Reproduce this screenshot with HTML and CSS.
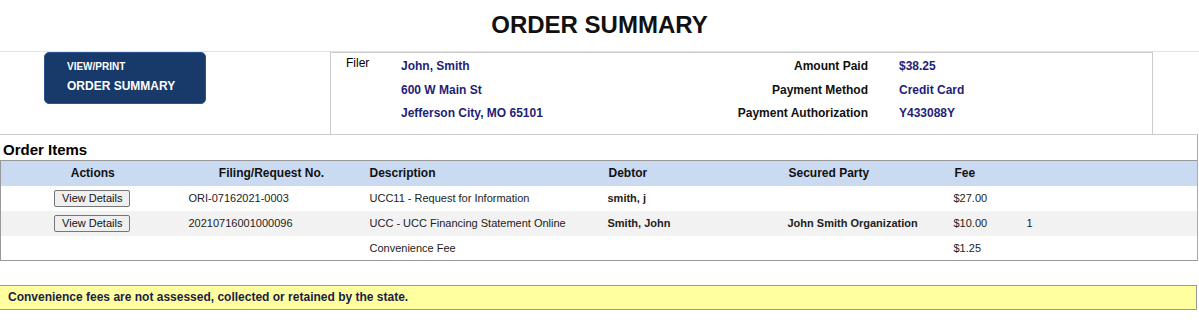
FILE: index.html
```html
<!DOCTYPE html>
<html lang="en">
<head>
    <meta charset="UTF-8">
    <meta name="viewport" content="width=device-width, initial-scale=1.0">
    <title>Order Summary</title>
    <link rel="stylesheet" href="styles.css">
</head>
<body>
    <h1 class="pageTitle">ORDER SUMMARY</h1>

    <div class="summaryHead">
        <div class="printCol">
            <a class="printBtn" href="#">
                <span class="small">VIEW/PRINT</span>
                <span class="big">ORDER SUMMARY</span>
            </a>
        </div>
        <div class="filerBox">
            <div class="lbl">Filer</div>
            <div class="val">John, Smith</div>
            <div class="rlbl">Amount Paid</div>
            <div class="val pad">$38.25</div>

            <div></div>
            <div class="val">600 W Main St</div>
            <div class="rlbl">Payment Method</div>
            <div class="val pad">Credit Card</div>

            <div></div>
            <div class="val">Jefferson City, MO 65101</div>
            <div class="rlbl">Payment Authorization</div>
            <div class="val pad">Y433088Y</div>
        </div>
    </div>

    <div class="orderItems">
        <div class="sectionTitle">Order Items</div>
        <table class="itemsTable">
            <colgroup>
                <col style="width:184px">
                <col style="width:174px">
                <col style="width:245px">
                <col style="width:180px">
                <col style="width:166px">
                <col style="width:73px">
                <col>
            </colgroup>
            <thead>
                <tr>
                    <th class="center">Actions</th>
                    <th class="center">Filing/Request No.</th>
                    <th class="desc">Description</th>
                    <th>Debtor</th>
                    <th>Secured Party</th>
                    <th>Fee</th>
                    <th></th>
                </tr>
            </thead>
            <tbody>
                <tr>
                    <td class="center"><button class="detailBtn">View Details</button></td>
                    <td>ORI-07162021-0003</td>
                    <td class="desc">UCC11 - Request for Information</td>
                    <td class="bold">smith, j</td>
                    <td class="bold"></td>
                    <td>$27.00</td>
                    <td></td>
                </tr>
                <tr class="alt">
                    <td class="center"><button class="detailBtn">View Details</button></td>
                    <td>20210716001000096</td>
                    <td class="desc">UCC - UCC Financing Statement Online</td>
                    <td class="bold">Smith, John</td>
                    <td class="bold">John Smith Organization</td>
                    <td>$10.00</td>
                    <td>1</td>
                </tr>
                <tr>
                    <td></td>
                    <td></td>
                    <td class="desc">Convenience Fee</td>
                    <td></td>
                    <td></td>
                    <td>$1.25</td>
                    <td></td>
                </tr>
            </tbody>
        </table>
    </div>

    <div class="feeNote">Convenience fees are not assessed, collected or retained by the state.</div>
</body>
</html>
```

FILE: styles.css
```css
*{
    margin: 0;
    padding: 0;
    box-sizing: border-box;
}
body{
    font-family: "Liberation Sans", Arial, sans-serif;
    color: #111;
    background: #fff;
}
.pageTitle{
    font-size: 24px;
    font-weight: bold;
    text-align: center;
    line-height: 28px;
    padding: 11px 0 12px;
    height: 51px;
}
.summaryHead{
    display: flex;
    border-top: 1px solid #e2e2e2;
    height: 83px;
}
.printCol{
    width: 330px;
    padding-left: 44px;
}
.printBtn{
    display: block;
    width: 162px;
    height: 52px;
    background: #173a6b;
    border: 1px solid #2b5590;
    border-radius: 5px;
    color: #fff;
    text-decoration: none;
    font-weight: bold;
    padding: 8px 0 0 22px;
}
.printBtn .small{
    display: block;
    font-size: 10px;
    line-height: 12px;
}
.printBtn .big{
    display: block;
    font-size: 12px;
    line-height: 16px;
    margin-top: 5px;
}
.filerBox{
    width: 823px;
    border: 1px solid #ccc;
    border-bottom: 0;
    display: grid;
    grid-template-columns: 55px 300px 167px 1fr;
    grid-auto-rows: 23.5px;
    padding: 2px 0 0 15px;
    font-size: 12px;
    line-height: 23.5px;
}
.filerBox .lbl{
    line-height: 16px;
    color: #000;
}
.filerBox .val{
    font-weight: bold;
    color: #1e1e78;
}
.filerBox .pad{
    padding-left: 31px;
}
.filerBox .rlbl{
    font-weight: bold;
    text-align: right;
    color: #111;
}
.orderItems{
    border-top: 1px solid #ccc;
    border-right: 1px solid #aaa;
    margin-right: 1px;
}
.sectionTitle{
    font-size: 15px;
    font-weight: bold;
    line-height: 18px;
    padding: 6px 0 1px 3px;
    color: #000;
}
.itemsTable{
    width: 100%;
    border-collapse: collapse;
    table-layout: fixed;
    border: 1px solid #999;
    border-right: 0;
    font-size: 11px;
    color: #222;
}
.itemsTable th{
    background: #c9daf1;
    font-size: 12px;
    font-weight: bold;
    text-align: left;
    height: 25px;
    padding: 0 5px;
    color: #111;
}
.itemsTable td{
    height: 25px;
    padding: 0 5px 0 4px;
    white-space: nowrap;
}
.itemsTable .center{
    text-align: center;
}
.itemsTable .desc{
    padding-left: 11px;
}
.itemsTable .bold{
    font-weight: bold;
}
.itemsTable tr.alt td{
    background: #f2f2f2;
}
.detailBtn{
    font-family: "Liberation Sans", Arial, sans-serif;
    font-size: 11px;
    height: 17px;
    padding: 0 7px;
    background: #efefef;
    border: 1px solid #767676;
    border-radius: 2px;
    color: #111;
}
.feeNote{
    margin: 24px 2px 0 0;
    height: 25px;
    background: #ffff9f;
    border: 1px solid #999;
    border-left: 0;
    font-size: 12px;
    font-weight: bold;
    line-height: 23px;
    padding-left: 8px;
    color: #1c1c48;
}
```
